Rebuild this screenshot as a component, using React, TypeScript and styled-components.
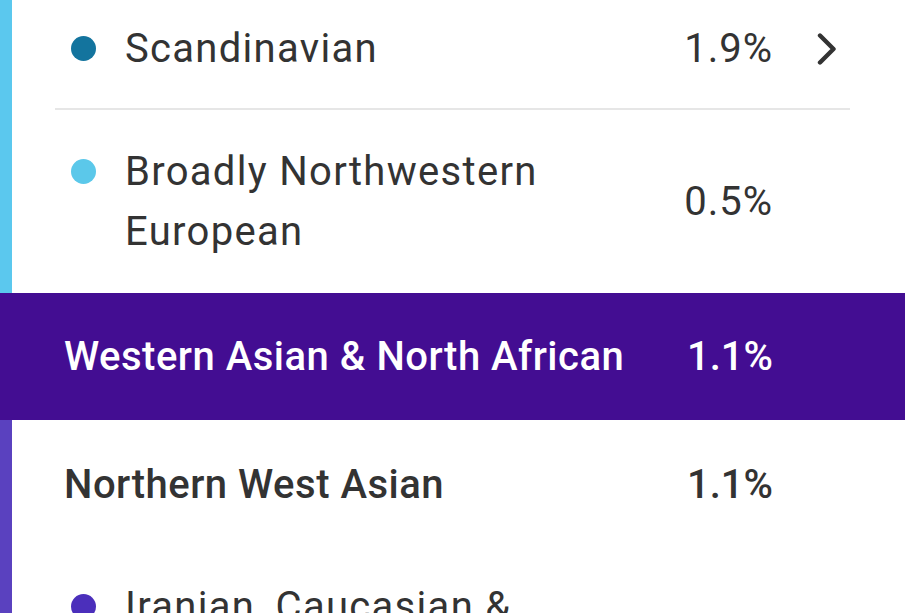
import styled, {createGlobalStyle} from "styled-components";

const GlobalStyle = createGlobalStyle`
  html, body {
    margin: 0;
    padding: 0;
    background: #ffffff;
    overflow: hidden;
  }
  body {
    font-family: Roboto, "Noto Sans", "Liberation Sans", sans-serif;
    color: #333333;
  }
`;

const Page = styled.div`
  width: 905px;
  height: 613px;
  overflow: hidden;
  display: flex;
  flex-direction: column;
  & > * {
    flex-shrink: 0;
  }
`;

const Section = styled.div<{$bar: string}>`
  display: flex;
  flex-direction: column;
  border-left: 12px solid ${({$bar}) => $bar};
  & > * {
    flex-shrink: 0;
  }
`;

const Row = styled.div<{$height?: number; $padTop?: number; $padBottom?: number}>`
  display: flex;
  align-items: center;
  box-sizing: border-box;
  height: ${({$height}) => ($height ? `${$height}px` : "auto")};
  padding: ${({$padTop}) => $padTop ?? 0}px 0 ${({$padBottom}) => $padBottom ?? 0}px 59px;
`;

const Name = styled.div`
  flex: 1;
  display: flex;
  align-items: flex-start;
`;

const Dot = styled.span<{$color: string}>`
  flex: 0 0 25px;
  width: 25px;
  height: 25px;
  border-radius: 50%;
  background: ${({$color}) => $color};
  margin-top: 17px;
`;

const Label = styled.div`
  margin-left: 29px;
  font-size: 40px;
  line-height: 60px;
  letter-spacing: 1.3px;
  font-weight: 400;
  color: #333333;
`;

const Percent = styled.div<{$strong?: boolean; $light?: boolean}>`
  font-size: 40px;
  line-height: 60px;
  letter-spacing: ${({$strong}) => ($strong ? "0px" : "1px")};
  font-weight: ${({$strong}) => ($strong ? 500 : 400)};
  color: ${({$light}) => ($light ? "#ffffff" : "#333333")};
  text-align: right;
`;

const Tail = styled.div`
  flex: 0 0 132px;
  display: flex;
  align-items: center;
  padding-left: 43px;
  box-sizing: border-box;
`;

const Divider = styled.div`
  height: 2px;
  background: #e6e6e6;
  margin: 0 55px 0 43px;
`;

const Band = styled.div`
  height: 127px;
  background: #430d92;
  display: flex;
  align-items: center;
  padding-left: 64px;
  box-sizing: border-box;
`;

const Heading = styled.div<{$light?: boolean}>`
  flex: 1;
  font-size: 40px;
  line-height: 60px;
  letter-spacing: 0.5px;
  font-weight: 500;
  color: ${({$light}) => ($light ? "#ffffff" : "#333333")};
`;

const SubRow = styled.div`
  height: 126px;
  display: flex;
  align-items: center;
  padding-left: 52px;
  padding-top: 4px;
  box-sizing: border-box;
`;

const Chevron = () => (
  <svg width="24" height="32" viewBox="0 0 24 32" fill="none">
    <path d="M4 2.5 L17.5 16 L4 29.5" stroke="#333333" strokeWidth="4.4" strokeLinecap="round" strokeLinejoin="round" />
  </svg>
);

const App = () => {
  return (
    <Page>
      <GlobalStyle />
      <Section $bar="#5bc8ee">
        <Row $height={108} $padBottom={10}>
          <Name>
            <Dot $color="#13749e" />
            <Label>Scandinavian</Label>
          </Name>
          <Percent>1.9%</Percent>
          <Tail>
            <Chevron />
          </Tail>
        </Row>
        <Divider />
        <Row $height={183}>
          <Name>
            <Dot $color="#5bc8ea" />
            <Label>
              Broadly Northwestern
              <br />
              European
            </Label>
          </Name>
          <Percent>0.5%</Percent>
          <Tail />
        </Row>
      </Section>
      <Band>
        <Heading $light>Western Asian &amp; North African</Heading>
        <Percent $strong $light>1.1%</Percent>
        <Tail />
      </Band>
      <Section $bar="#5a41bf">
        <SubRow>
          <Heading>Northern West Asian</Heading>
          <Percent $strong>1.1%</Percent>
          <Tail />
        </SubRow>
        <Row $padTop={31}>
          <Name>
            <Dot $color="#4b2fbb" />
            <Label>
              Iranian, Caucasian &amp;
              <br />
              Mesopotamian
            </Label>
          </Name>
          <Percent>0.4%</Percent>
          <Tail />
        </Row>
      </Section>
    </Page>
  );
};

export default App;
